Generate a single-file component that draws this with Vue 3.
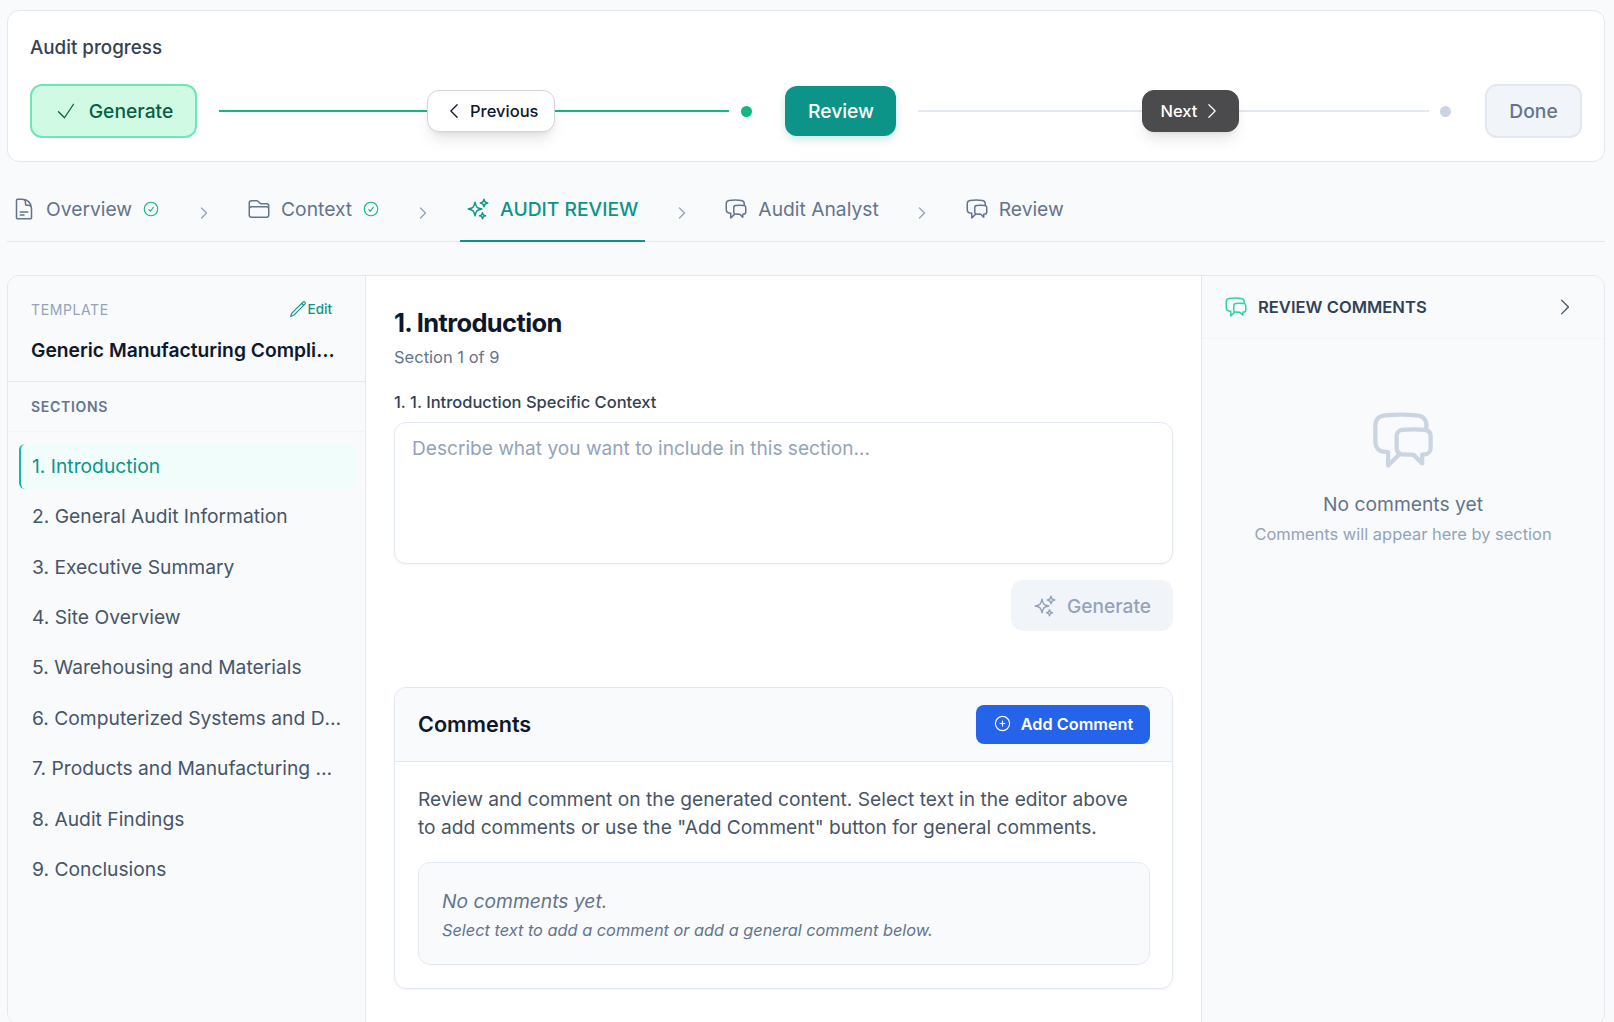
<script setup>
const icons = {
  doc: 'M19.5 14.25v-2.625a3.375 3.375 0 0 0-3.375-3.375h-1.5A1.125 1.125 0 0 1 13.5 7.125v-1.5a3.375 3.375 0 0 0-3.375-3.375H8.25m0 12.75h7.5m-7.5 3H12M10.5 2.25H5.625c-.621 0-1.125.504-1.125 1.125v17.25c0 .621.504 1.125 1.125 1.125h12.75c.621 0 1.125-.504 1.125-1.125V11.25a9 9 0 0 0-9-9Z',
  folder: 'M2.25 12.75V12A2.25 2.25 0 0 1 4.5 9.75h15A2.25 2.25 0 0 1 21.75 12v.75m-8.69-6.44-2.12-2.12a1.5 1.5 0 0 0-1.061-.44H4.5A2.25 2.25 0 0 0 2.25 6v12a2.25 2.25 0 0 0 2.25 2.25h15A2.25 2.25 0 0 0 21.75 18V9a2.25 2.25 0 0 0-2.25-2.25h-5.379a1.5 1.5 0 0 1-1.06-.44Z',
  sparkles: 'M9.813 15.904 9 18.75l-.813-2.846a4.5 4.5 0 0 0-3.09-3.09L2.25 12l2.846-.813a4.5 4.5 0 0 0 3.09-3.09L9 5.25l.813 2.846a4.5 4.5 0 0 0 3.09 3.09L15.75 12l-2.846.813a4.5 4.5 0 0 0-3.09 3.09ZM18.259 8.715 18 9.75l-.259-1.035a3.375 3.375 0 0 0-2.456-2.456L14.25 6l1.035-.259a3.375 3.375 0 0 0 2.456-2.456L18 2.25l.259 1.035a3.375 3.375 0 0 0 2.456 2.456L21.75 6l-1.035.259a3.375 3.375 0 0 0-2.456 2.456ZM16.894 20.567 16.5 21.75l-.394-1.183a2.25 2.25 0 0 0-1.423-1.423L13.5 18.75l1.183-.394a2.25 2.25 0 0 0 1.423-1.423l.394-1.183.394 1.183a2.25 2.25 0 0 0 1.423 1.423l1.183.394-1.183.394a2.25 2.25 0 0 0-1.423 1.423Z',
  chat: 'M20.25 8.511c.884.284 1.5 1.128 1.5 2.097v4.286c0 1.136-.847 2.1-1.98 2.193-.34.027-.68.052-1.02.072v3.091l-3-3c-1.354 0-2.694-.055-4.02-.163a2.115 2.115 0 0 1-.825-.242m9.345-8.334a2.126 2.126 0 0 0-.476-.095 48.64 48.64 0 0 0-8.048 0c-1.131.094-1.976 1.057-1.976 2.192v4.286c0 .837.46 1.58 1.155 1.951m9.345-8.334V6.637c0-1.621-1.152-3.026-2.76-3.235A48.455 48.455 0 0 0 11.25 3c-2.115 0-4.198.137-6.24.402-1.608.209-2.76 1.614-2.76 3.235v6.226c0 1.621 1.152 3.026 2.76 3.235.577.075 1.157.14 1.74.194V21l4.155-4.155',
  pencil: 'm16.862 4.487 1.687-1.688a1.875 1.875 0 1 1 2.652 2.652L6.832 19.82a4.5 4.5 0 0 1-1.897 1.13l-2.685.8.8-2.685a4.5 4.5 0 0 1 1.13-1.897L16.863 4.487Zm0 0L19.5 7.125',
  checkCircle: 'M9 12.75 11.25 15 15 9.75M21 12a9 9 0 1 1-18 0 9 9 0 0 1 18 0Z',
  plusCircle: 'M12 9v6m3-3H9m12 0a9 9 0 1 1-18 0 9 9 0 0 1 18 0Z',
  check: 'm4.5 12.75 6 6 9-13.5',
  right: 'm8.25 4.5 7.5 7.5-7.5 7.5',
  left: 'M15.75 19.5 8.25 12l7.5-7.5',
};

const tabs = [
  { label: 'Overview', icon: 'doc', done: true },
  { label: 'Context', icon: 'folder', done: true },
  { label: 'AUDIT REVIEW', icon: 'sparkles', active: true },
  { label: 'Audit Analyst', icon: 'chat' },
  { label: 'Review', icon: 'chat', last: true },
];

const sections = [
  '1. Introduction',
  '2. General Audit Information',
  '3. Executive Summary',
  '4. Site Overview',
  '5. Warehousing and Materials',
  '6. Computerized Systems and Data Integrity',
  '7. Products and Manufacturing Operations',
  '8. Audit Findings',
  '9. Conclusions',
];
</script>

<template>
  <div class="page">
    <section class="progress">
      <div class="progress-title">Audit progress</div>
      <div class="steps">
        <div class="step step-done">
          <svg class="icon thin" width="24" height="24" viewBox="0 0 24 24"><path :d="icons.check" /></svg>
          Generate
        </div>
        <div class="connector green">
          <button class="nav nav-prev">
            <svg class="icon" width="20" height="20" viewBox="0 0 24 24"><path :d="icons.left" /></svg>
            Previous
          </button>
        </div>
        <span class="dot"></span>
        <div class="step step-current">Review</div>
        <div class="connector">
          <button class="nav nav-next">
            Next
            <svg class="icon" width="20" height="20" viewBox="0 0 24 24"><path :d="icons.right" /></svg>
          </button>
        </div>
        <span class="dot dot-grey"></span>
        <div class="step step-todo">Done</div>
      </div>
    </section>

    <nav class="tabs">
      <template v-for="tab in tabs" :key="tab.label">
        <div class="tab" :class="{ active: tab.active }">
          <svg class="icon" width="24" height="24" viewBox="0 0 24 24"><path :d="icons[tab.icon]" /></svg>
          <span>{{ tab.label }}</span>
          <svg v-if="tab.done" class="icon tab-check" width="18" height="18" viewBox="0 0 24 24"><path :d="icons.checkCircle" /></svg>
        </div>
        <svg v-if="!tab.last" class="icon tab-sep" width="16" height="16" viewBox="0 0 24 24"><path :d="icons.right" /></svg>
      </template>
    </nav>

    <main class="workspace">
      <aside class="sidebar">
        <div class="template">
          <div class="template-top">
            <span class="template-label">TEMPLATE</span>
            <span class="edit">
              <svg class="icon" width="18" height="18" viewBox="0 0 24 24"><path :d="icons.pencil" /></svg>
              Edit
            </span>
          </div>
          <div class="template-name">Generic Manufacturing Compliance Audit</div>
        </div>
        <div class="sections-head">SECTIONS</div>
        <ul class="section-list">
          <li v-for="(s, i) in sections" :key="s" :class="{ current: i === 0 }">{{ s }}</li>
        </ul>
      </aside>

      <div class="content">
        <h1>1. Introduction</h1>
        <div class="subtitle">Section 1 of 9</div>
        <label class="field-label">1. 1. Introduction Specific Context</label>
        <textarea class="context" placeholder="Describe what you want to include in this section..."></textarea>
        <div class="gen-row">
          <button class="gen-btn">
            <svg class="icon" width="24" height="24" viewBox="0 0 24 24"><path :d="icons.sparkles" /></svg>
            Generate
          </button>
        </div>

        <section class="comments">
          <header class="comments-head">
            <h2>Comments</h2>
            <button class="add-btn">
              <svg class="icon" width="19" height="19" viewBox="0 0 24 24"><path :d="icons.plusCircle" /></svg>
              Add Comment
            </button>
          </header>
          <div class="comments-body">
            <p>Review and comment on the generated content. Select text in the editor above to add comments or use the "Add Comment" button for general comments.</p>
            <div class="note">
              <div class="note-main">No comments yet.</div>
              <div class="note-sub">Select text to add a comment or add a general comment below.</div>
            </div>
          </div>
        </section>
      </div>

      <aside class="review">
        <header class="review-head">
          <svg class="icon review-icon" width="24" height="24" viewBox="0 0 24 24"><path :d="icons.chat" /></svg>
          <span class="review-title">REVIEW COMMENTS</span>
          <svg class="icon review-arrow" width="22" height="22" viewBox="0 0 24 24"><path :d="icons.right" /></svg>
        </header>
        <div class="review-empty">
          <svg class="icon empty-icon" width="68" height="68" viewBox="0 0 24 24"><path :d="icons.chat" /></svg>
          <div class="empty-main">No comments yet</div>
          <div class="empty-sub">Comments will appear here by section</div>
        </div>
      </aside>
    </main>
  </div>
</template>

<style>
html,
body {
  margin: 0;
  height: 100%;
  overflow: hidden;
  background: #f8fafc;
}
</style>

<style scoped>
.page {
  height: 1022px;
  padding: 10px 9px 0 7px;
  box-sizing: border-box;
  overflow: hidden;
  font-family: Inter, "Noto Sans", sans-serif;
  color: #0f172a;
}
.icon {
  fill: none;
  stroke: currentColor;
  stroke-width: 1.5;
  stroke-linecap: round;
  stroke-linejoin: round;
  flex-shrink: 0;
}
.icon.thin {
  stroke-width: 1.25;
}

.progress {
  height: 152px;
  box-sizing: border-box;
  padding: 23px 22px 0;
  background: #fff;
  border: 1px solid #e2e8f0;
  border-radius: 12px;
}
.progress-title {
  font-size: 18.8px;
  line-height: 28px;
  font-weight: 500;
  color: #334155;
  margin-bottom: 22px;
}
.steps {
  display: flex;
  align-items: center;
}
.step {
  height: 54px;
  box-sizing: border-box;
  display: flex;
  align-items: center;
  justify-content: center;
  border-radius: 12px;
  font-size: 19.25px;
  font-weight: 500;
}
.step-done {
  width: 167px;
  gap: 11px;
  background: #d1fae5;
  border: 2px solid #6ee7b7;
  color: #065f46;
}
.step-current {
  width: 111px;
  height: 50px;
  padding-left: 2px;
  background: #0d9488;
  color: #fff;
  box-shadow: 0 4px 8px rgba(13, 148, 136, 0.2);
}
.step-todo {
  width: 97px;
  background: #f1f5f9;
  border: 2px solid #e2e8f0;
  color: #64748b;
}
.connector {
  flex: 1;
  height: 2px;
  margin: 0 11px 0 22px;
  background: #e2e8f0;
  position: relative;
}
.connector.green {
  flex: 0 0 509.5px;
  background: #10b981;
  margin-right: 12px;
}
.dot {
  width: 11px;
  height: 11px;
  border-radius: 50%;
  background: #10b981;
  margin-right: 33px;
}
.dot-grey {
  background: #cbd5e1;
  margin-right: 34px;
}
.nav {
  position: absolute;
  top: 50%;
  height: 42px;
  transform: translateY(-50%);
  display: flex;
  align-items: center;
  gap: 6px;
  box-sizing: border-box;
  border-radius: 12px;
  font-family: inherit;
  font-size: 16.5px;
  font-weight: 500;
  box-shadow: 0 10px 15px -3px rgba(0, 0, 0, 0.1), 0 4px 6px -4px rgba(0, 0, 0, 0.1);
}
.nav-prev {
  left: 208px;
  width: 128px;
  padding: 0 0 0 16px;
  background: #fff;
  border: 1px solid #d6d3d1;
  color: #0f172a;
}
.nav-next {
  left: 224px;
  width: 97px;
  gap: 5px;
  padding: 0 0 0 18px;
  background: #4b4a4c;
  border: 1px solid #4b4a4c;
  color: #fff;
}

.tabs {
  height: 70px;
  box-sizing: border-box;
  margin-top: 10px;
  margin-bottom: 33px;
  padding-top: 5px;
  display: flex;
  align-items: stretch;
  border-bottom: 1px solid #e2e8f0;
}
.tab {
  display: flex;
  align-items: center;
  gap: 10px;
  padding: 0 5px 0 6px;
  font-size: 19.25px;
  color: #64748b;
  margin-bottom: -1px;
  border-bottom: 2px solid transparent;
  box-sizing: border-box;
}
.tab:first-child {
  padding-left: 5px;
}
.tab.active {
  padding-right: 7px;
  color: #0d9488;
  font-weight: 500;
  border-bottom-color: #0d9488;
}
.tab-check {
  color: #10b981;
}
.tab-sep {
  color: #94a3b8;
  stroke-width: 2;
  align-self: center;
  margin: 8px 29px 0 30px;
}
.tab:first-child + .tab-sep {
  margin-left: 31px;
}
.tab.active + .tab-sep {
  margin-left: 29px;
  margin-right: 28px;
}

.workspace {
  height: 748px;
  display: flex;
  background: #fff;
  border: 1px solid #e2e8f0;
  border-radius: 12px;
  overflow: hidden;
}
.sidebar {
  width: 357px;
  flex-shrink: 0;
  background: #f8fafc;
  border-right: 1px solid #e2e8f0;
}
.template {
  height: 106px;
  box-sizing: border-box;
  padding: 22px 28px 0 23px;
  border-bottom: 1px solid #e2e8f0;
}
.template-top {
  display: flex;
  justify-content: space-between;
  align-items: center;
  height: 22px;
  margin-right: 5px;
}
.template-label {
  font-size: 14px;
  letter-spacing: 0.6px;
  color: #94a3b8;
}
.edit {
  display: flex;
  align-items: center;
  gap: 1px;
  font-size: 13.5px;
  font-weight: 500;
  color: #0d9488;
}
.template-name {
  margin-top: 17px;
  font-size: 19.25px;
  line-height: 26px;
  font-weight: 600;
  white-space: nowrap;
  overflow: hidden;
  text-overflow: ellipsis;
}
.sections-head {
  height: 50px;
  box-sizing: border-box;
  padding-left: 23px;
  display: flex;
  align-items: center;
  font-size: 14px;
  font-weight: 600;
  letter-spacing: 0.7px;
  color: #64748b;
  border-bottom: 1px solid #f1f5f9;
}
.section-list {
  list-style: none;
  margin: 0;
  padding: 11.8px 10px 0 11px;
  display: flex;
  flex-direction: column;
  gap: 5px;
}
.section-list li {
  height: 45.4px;
  box-sizing: border-box;
  padding: 0 12px 0 11px;
  line-height: 45.4px;
  font-size: 19.25px;
  color: #475569;
  border-radius: 6px;
  white-space: nowrap;
  overflow: hidden;
  text-overflow: ellipsis;
  border-left: 2px solid transparent;
}
.section-list li.current {
  background: #f0fdfa;
  color: #0d9488;
  border-left-color: #14b8a6;
}

.content {
  flex: 1;
  min-width: 0;
  padding: 29px 28px 0;
  background: #fff;
}
h1 {
  margin: 0;
  font-size: 25.5px;
  line-height: 36px;
  font-weight: 700;
  letter-spacing: -0.64px;
  color: #0f172a;
}
.subtitle {
  margin-top: 4px;
  font-size: 16.5px;
  line-height: 24px;
  color: #64748b;
}
.field-label {
  display: block;
  margin-top: 21px;
  font-size: 16.5px;
  line-height: 24px;
  font-weight: 450;
  color: #334155;
}
.context {
  display: block;
  width: 100%;
  height: 142px;
  margin-top: 8px;
  box-sizing: border-box;
  padding: 13px 17px;
  border: 1px solid #e2e8f0;
  border-radius: 12px;
  resize: none;
  outline: none;
  font-family: inherit;
  font-size: 19.1px;
  line-height: 24px;
  box-shadow: 0 1px 2px rgba(0, 0, 0, 0.05);
}
.context::placeholder {
  color: #94a3b8;
}
.gen-row {
  display: flex;
  justify-content: flex-end;
  margin-top: 16px;
}
.gen-btn {
  width: 162px;
  height: 51px;
  display: flex;
  align-items: center;
  justify-content: center;
  gap: 10px;
  border: none;
  border-radius: 12px;
  background: #f1f5f9;
  color: #94a3b8;
  font-family: inherit;
  font-size: 19.1px;
  font-weight: 500;
}
.comments {
  margin-top: 56px;
  border: 1px solid #e2e8f0;
  border-radius: 12px;
  overflow: hidden;
  box-shadow: 0 1px 2px rgba(0, 0, 0, 0.05);
}
.comments-head {
  height: 74px;
  box-sizing: border-box;
  padding: 0 22px 0 23px;
  display: flex;
  justify-content: space-between;
  align-items: center;
  background: #f8fafc;
  border-bottom: 1px solid #e2e8f0;
}
h2 {
  margin: 0 0 2px;
  font-size: 21.6px;
  font-weight: 600;
  color: #0f172a;
}
.add-btn {
  width: 174px;
  height: 39px;
  box-sizing: border-box;
  padding: 0 0 2px;
  display: flex;
  align-items: center;
  justify-content: center;
  gap: 9px;
  border: none;
  border-radius: 8px;
  background: #2563eb;
  color: #fff;
  font-family: inherit;
  font-size: 16.3px;
  font-weight: 600;
}
.comments-body {
  padding: 23px 22px 23px 23px;
}
.comments-body p {
  margin: 0;
  padding-right: 18px;
  font-size: 19.2px;
  line-height: 28px;
  color: #475569;
}
.note {
  margin-top: 21px;
  height: 103px;
  box-sizing: border-box;
  padding: 25px 23px 0;
  background: #f8fafc;
  border: 1px solid #e2e8f0;
  border-radius: 12px;
  font-style: italic;
  color: #64748b;
}
.note-main {
  font-size: 19.25px;
  line-height: 26px;
}
.note-sub {
  margin-top: 4px;
  font-size: 16.33px;
  line-height: 24px;
}

.review {
  width: 402px;
  flex-shrink: 0;
  background: #f8fafc;
  border-left: 1px solid #e2e8f0;
}
.review-head {
  height: 63px;
  box-sizing: border-box;
  padding: 0 28px 0 22px;
  display: flex;
  align-items: center;
  gap: 10px;
  border-bottom: 1px solid #f1f5f9;
}
.review-icon {
  color: #2dd4a8;
}
.review-title {
  flex: 1;
  font-size: 16.6px;
  font-weight: 600;
  color: #334155;
}
.review-arrow {
  color: #475569;
}
.review-empty {
  padding-top: 67px;
  display: flex;
  flex-direction: column;
  align-items: center;
}
.empty-icon {
  color: #cbd5e1;
}
.empty-main {
  margin-top: 16px;
  font-size: 19.25px;
  line-height: 28px;
  color: #64748b;
}
.empty-sub {
  margin-top: 4px;
  font-size: 16.45px;
  line-height: 24px;
  color: #94a3b8;
}
</style>
